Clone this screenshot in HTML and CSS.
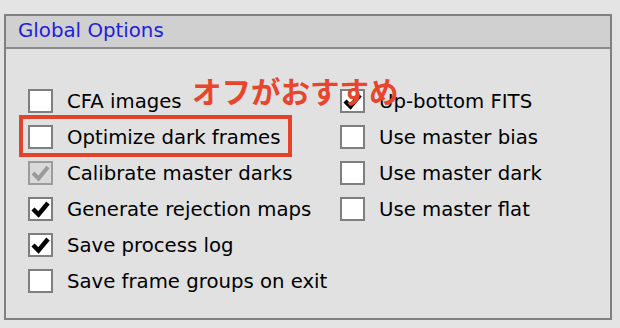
FILE: index.html
```html
<!DOCTYPE html>
<html lang="en">
<head>
<meta charset="utf-8">
<title>Global Options</title>
<link rel="stylesheet" href="styles.css">
</head>
<body>
<div class="panel">
  <div class="panel-header">Global Options</div>
  <div class="panel-body">
    <div class="col">
      <div class="opt"><span class="box"></span><span class="label">CFA images</span></div>
      <div class="opt"><span class="box"></span><span class="label">Optimize dark frames</span></div>
      <div class="opt disabled"><span class="box"><svg viewBox="0 0 21 20" class="tick"><polyline points="3,10 8.5,15.5 18,4"/></svg></span><span class="label">Calibrate master darks</span></div>
      <div class="opt"><span class="box"><svg viewBox="0 0 21 20" class="tick"><polyline points="3,10 8.5,15.5 18,4"/></svg></span><span class="label">Generate rejection maps</span></div>
      <div class="opt"><span class="box"><svg viewBox="0 0 21 20" class="tick"><polyline points="3,10 8.5,15.5 18,4"/></svg></span><span class="label">Save process log</span></div>
      <div class="opt"><span class="box"></span><span class="label">Save frame groups on exit</span></div>
    </div>
    <div class="col">
      <div class="opt"><span class="box"><svg viewBox="0 0 21 20" class="tick"><polyline points="3,10 8.5,15.5 18,4"/></svg></span><span class="label">Up-bottom FITS</span></div>
      <div class="opt"><span class="box"></span><span class="label">Use master bias</span></div>
      <div class="opt"><span class="box"></span><span class="label">Use master dark</span></div>
      <div class="opt"><span class="box"></span><span class="label">Use master flat</span></div>
    </div>
  </div>
  <div class="note">オフがおすすめ</div>
  <div class="highlight"></div>
</div>
</body>
</html>
```

FILE: styles.css
```css
html, body {
  margin: 0;
  padding: 0;
  background: #e4e4e4;
}
body {
  padding: 14px 0 0 4px;
  font-family: "DejaVu Sans", "Noto Sans", sans-serif;
}
.panel {
  position: relative;
  width: 608px;
  height: 306px;
  box-sizing: border-box;
  border: 2px solid #808080;
  background: #e1e1e1;
}
.panel-header {
  box-sizing: border-box;
  background: #d0d0d0;
  border-bottom: 2px solid #8a8a8a;
  height: 33px;
  padding: 3px 0 0 12px;
  font-size: 19.8px;
  line-height: 24px;
  color: #1e1ee0;
}
.panel-body {
  display: grid;
  grid-template-columns: 312px 1fr;
  padding: 34px 0 0 22px;
}
.col {
  display: flex;
  flex-direction: column;
}
.opt {
  display: flex;
  align-items: center;
  height: 36px;
  gap: 14px;
}
.box {
  width: 25px;
  height: 24px;
  box-sizing: border-box;
  border: 2px solid #7f7f7f;
  background: #ffffff;
  display: flex;
  flex-shrink: 0;
}
.tick {
  width: 21px;
  height: 20px;
}
.tick polyline {
  fill: none;
  stroke: #000;
  stroke-width: 4.5;
  stroke-linecap: butt;
  stroke-linejoin: miter;
}
.opt .label {
  font-size: 19.7px;
  color: #000;
  line-height: 24px;
  padding-top: 1px;
}
.opt.disabled .box {
  border-color: #9c9c9c;
  background: #d9d9d9;
}
.opt.disabled .tick polyline {
  stroke: #9a9a9a;
  stroke-width: 4;
}
.note {
  position: absolute;
  left: 186px;
  top: 59px;
  font-family: "Noto Sans CJK JP", sans-serif;
  font-weight: 700;
  font-size: 29.5px;
  line-height: 30px;
  color: #e8452c;
  letter-spacing: 0;
}
.highlight {
  position: absolute;
  left: 13px;
  top: 99px;
  width: 273px;
  height: 42px;
  box-sizing: border-box;
  border: 4px solid #e4432b;
}
```
